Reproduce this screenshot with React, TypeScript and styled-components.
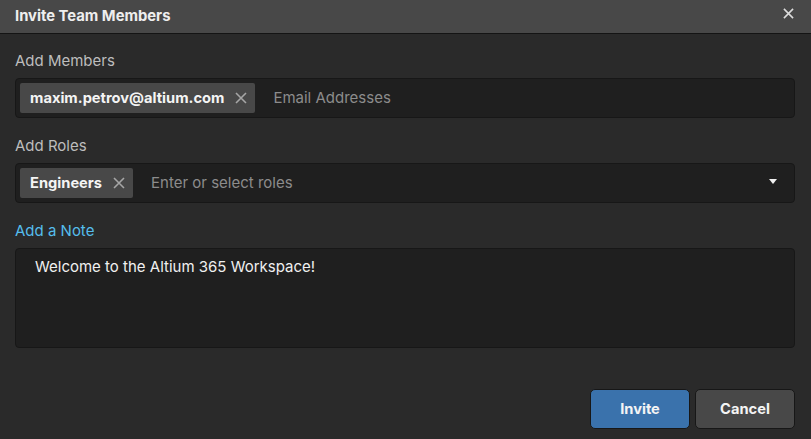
import { FC } from "react";
import styled, { createGlobalStyle } from "styled-components";

const GlobalStyle = createGlobalStyle`
  html, body {
    margin: 0;
    padding: 0;
    background: #2a2a2a;
  }

  * {
    box-sizing: border-box;
  }
`;

const CrossIcon: FC<{ size: number; color: string; weight?: number }> = ({ size, color, weight = 1.6 }) => (
  <svg width={size} height={size} viewBox="0 0 12 12" fill="none">
    <path d="M1 1L11 11M11 1L1 11" stroke={color} strokeWidth={weight} />
  </svg>
);

const Tag: FC<{ label: string }> = ({ label }) => (
  <Chip>
    <ChipText>{label}</ChipText>
    <CrossIcon size={12} color="#a6a6a6" />
  </Chip>
);

const App: FC = () => {
  return (
    <Dialog>
      <GlobalStyle />
      <Header>
        <Title>Invite Team Members</Title>
        <CloseButton>
          <CrossIcon size={11} color="#dcdcdc" weight={1.7} />
        </CloseButton>
      </Header>
      <Body>
        <Label>Add Members</Label>
        <Field>
          <Tag label="maxim.petrov@altium.com" />
          <Placeholder>Email Addresses</Placeholder>
        </Field>
        <Label>Add Roles</Label>
        <Field>
          <Tag label="Engineers" />
          <Placeholder>Enter or select roles</Placeholder>
          <Caret />
        </Field>
        <NoteLink>Add a Note</NoteLink>
        <NoteBox>Welcome to the Altium 365 Workspace!</NoteBox>
        <Footer>
          <Button $primary>Invite</Button>
          <Button>Cancel</Button>
        </Footer>
      </Body>
    </Dialog>
  );
};

export default App;

const Dialog = styled.div`
  width: 811px;
  height: 439px;
  overflow: hidden;
  background: #2a2a2a;
  font-family: Inter, "Liberation Sans", sans-serif;
  font-size: 15px;
`;

const Header = styled.div`
  height: 34px;
  padding: 0 17px 0 15px;
  display: flex;
  align-items: center;
  justify-content: space-between;
  background: #484848;
  border-bottom: 1px solid #141414;
`;

const Title = styled.div`
  margin-top: -2px;
  font-size: 14.8px;
  font-weight: 700;
  color: #eeeeee;
`;

const CloseButton = styled.div`
  display: flex;
  margin-top: -6px;
`;

const Body = styled.div`
  padding: 0 16px 0 15px;
  display: flex;
  flex-direction: column;
`;

const Label = styled.div`
  height: 20px;
  margin: 17px 0 7px;
  line-height: 20px;
  font-size: 15px;
  color: #bdbdbd;
`;

const Field = styled.div`
  height: 40px;
  margin-bottom: 1px;
  padding: 0 4px;
  display: flex;
  align-items: center;
  position: relative;
  background: #1f1f1f;
  border: 1px solid #171717;
  border-radius: 4px;
`;

const Chip = styled.div`
  height: 30px;
  padding: 0 8px 0 10px;
  display: flex;
  align-items: center;
  column-gap: 11px;
  background: #484848;
  border-radius: 2px;
`;

const ChipText = styled.span`
  margin-top: -1px;
  font-size: 14.67px;
  font-weight: 700;
  color: #f4f4f4;
`;

const Placeholder = styled.span`
  margin-left: 18px;
  margin-top: -1px;
  font-size: 15px;
  color: #8c8c8c;
`;

const Caret = styled.span`
  position: absolute;
  right: 17px;
  top: 15px;
  border-left: 4.5px solid transparent;
  border-right: 4.5px solid transparent;
  border-top: 5px solid #f0f0f0;
`;

const NoteLink = styled.div`
  height: 20px;
  margin: 17px 0 7px;
  line-height: 20px;
  font-size: 15px;
  color: #55bdec;
`;

const NoteBox = styled.div`
  height: 100px;
  padding: 8px 19px;
  line-height: 20px;
  font-size: 15px;
  color: #f0f0f0;
  background: #1f1f1f;
  border: 1px solid #171717;
  border-radius: 4px;
`;

const Footer = styled.div`
  margin-top: 41px;
  display: flex;
  justify-content: flex-end;
  column-gap: 5px;
`;

const Button = styled.div<{ $primary?: boolean }>`
  width: 100px;
  height: 40px;
  display: flex;
  align-items: center;
  justify-content: center;
  font-size: 14.67px;
  font-weight: 700;
  color: #f4f4f4;
  background: ${(p) => (p.$primary ? "#3a72ac" : "#484848")};
  border: 1px solid #171717;
  border-radius: 5px;
`;
